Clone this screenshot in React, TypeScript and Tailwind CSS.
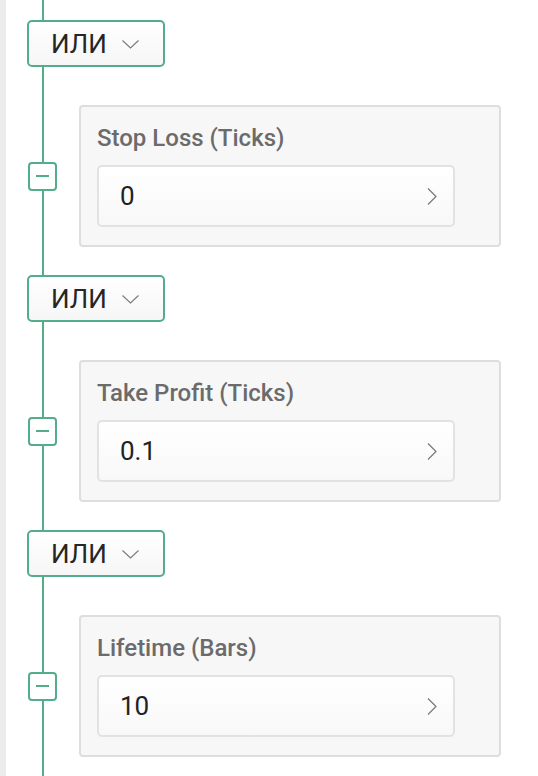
import React from "react";

const groups = [
  { label: "Stop Loss (Ticks)", value: "0" },
  { label: "Take Profit (Ticks)", value: "0.1" },
  { label: "Lifetime (Bars)", value: "10" },
];

function OrButton() {
  return (
    <div className="relative ml-[21px] flex h-[47px] w-[138px] items-center rounded-[5px] border-2 border-[#52ad8a] bg-gradient-to-b from-white to-[#f6f6f6] pl-[22px]">
      <span className="text-[26px] leading-none text-[#262626]">ИЛИ</span>
      <svg className="ml-[15px] mt-[2px]" width="17" height="9" viewBox="0 0 17 9" fill="none">
        <path d="M0.5 0.5 L8.5 8 L16.5 0.5" stroke="#7a7a7a" strokeWidth="1.1" />
      </svg>
    </div>
  );
}

function Row({ label, value }: { label: string; value: string }) {
  return (
    <div className="relative mt-[38px] flex items-center">
      <div className="ml-[22px] flex h-[29px] w-[29px] items-center justify-center rounded-[4px] border-2 border-[#52ad8a] bg-white">
        <div className="h-[2px] w-[13px] bg-[#52ad8a]" />
      </div>
      <div className="ml-[22px] flex h-[142px] w-[422px] flex-col rounded-[4px] border-2 border-[#dedede] bg-[#f7f7f7] pl-[16px] pt-[17px]">
        <div className="text-[24px] font-medium leading-[28px] text-[#6b6b6b]">{label}</div>
        <div className="mt-[13px] flex h-[62px] w-[358px] items-center justify-between rounded-[5px] border-2 border-[#e2e2e2] bg-gradient-to-b from-white to-[#f8f8f8] pl-[21px] pr-[16px]">
          <span className="text-[26px] leading-none text-[#222]">{value}</span>
          <svg width="10" height="17" viewBox="0 0 10 17" fill="none">
            <path d="M1 0.5 L9 8.5 L1 16.5" stroke="#777" strokeWidth="1.2" />
          </svg>
        </div>
      </div>
    </div>
  );
}

export default function App() {
  return (
    <div
      className="flex h-[776px] w-[538px] overflow-hidden bg-white"
      style={{ fontFamily: "Roboto, 'Noto Sans', sans-serif" }}
    >
      <div className="w-[6px] shrink-0 bg-[#ececec]" />
      <div className="relative flex-1">
        <div className="absolute bottom-0 left-[36px] top-0 w-[2px] bg-[#52ad8a]" />
        <div className="relative flex flex-col pt-[20px]">
          {groups.map((g, i) => (
            <div key={i} className={i > 0 ? "mt-[28px]" : ""}>
              <OrButton />
              <Row label={g.label} value={g.value} />
            </div>
          ))}
        </div>
      </div>
    </div>
  );
}
